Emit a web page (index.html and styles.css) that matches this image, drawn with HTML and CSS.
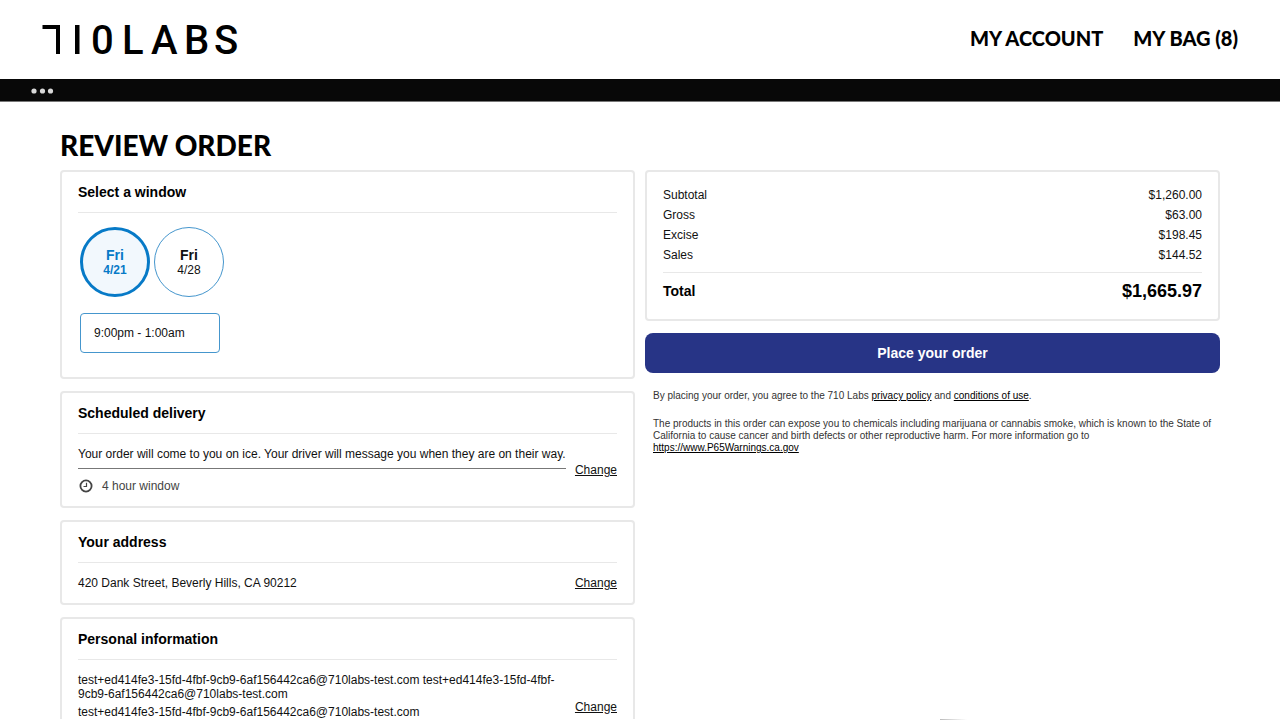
FILE: index.html
```html
<!DOCTYPE html>
<html lang="en">
<head>
<meta charset="utf-8">
<meta name="viewport" content="width=device-width, initial-scale=1">
<title>Review Order</title>
<link rel="stylesheet" href="styles.css">
</head>
<body>
<header class="header">
  <a class="logo" href="#" aria-label="710 Labs">
    <svg width="200" height="56" viewBox="0 0 200 56" aria-hidden="true">
      <rect x="1.5" y="15" width="17.5" height="4"/>
      <rect x="15" y="15" width="4" height="29"/>
      <rect x="34" y="15" width="4.5" height="29"/>
      <text class="logo-text" y="44" x="50 81 110 143 173">0LABS</text>
    </svg>
  </a>
  <nav class="nav">
    <a href="#">MY ACCOUNT</a>
    <a href="#">MY BAG (8)</a>
  </nav>
</header>
<div class="menubar">
  <button class="more" type="button" aria-label="Menu">
    <svg width="24" height="6" viewBox="0 0 24 6" fill="#d8d8d8"><circle cx="3" cy="3" r="2.6"/><circle cx="11.5" cy="3" r="2.6"/><circle cx="19.5" cy="3" r="2.6"/></svg>
  </button>
</div>
<main class="page">
  <h1 class="title">REVIEW ORDER</h1>
  <div class="columns">
    <div class="column">
      <section class="card">
        <h2 class="card-title">Select a window</h2>
        <div class="window">
          <div class="dates">
            <button class="date selected" type="button" aria-pressed="true"><b>Fri</b><span>4/21</span></button>
            <button class="date" type="button" aria-pressed="false"><b>Fri</b><span>4/28</span></button>
          </div>
          <button class="slot" type="button">9:00pm - 1:00am</button>
        </div>
      </section>
      <section class="card">
        <h2 class="card-title">Scheduled delivery</h2>
        <div class="row">
          <div class="info">
            <p class="note">Your order will come to you on ice. Your driver will message you when they are on their way.</p>
            <p class="hours">
              <svg width="14" height="14" viewBox="0 0 14 14" fill="none" stroke="#444"><circle cx="7" cy="7" r="5.6" stroke-width="1.8"/><path d="M7.5 3.8V7.5H4.5" stroke-width="1.2"/></svg>
              4 hour window
            </p>
          </div>
          <a class="change" href="#">Change</a>
        </div>
      </section>
      <section class="card">
        <h2 class="card-title">Your address</h2>
        <div class="row">
          <p>420 Dank Street, Beverly Hills, CA 90212</p>
          <a class="change" href="#">Change</a>
        </div>
      </section>
      <section class="card">
        <h2 class="card-title">Personal information</h2>
        <div class="row person">
          <div class="info">
            <p>test+ed414fe3-15fd-4fbf-9cb9-6af156442ca6@710labs-test.com test+ed414fe3-15fd-4fbf-9cb9-6af156442ca6@710labs-test.com</p>
            <p>test+ed414fe3-15fd-4fbf-9cb9-6af156442ca6@710labs-test.com</p>
          </div>
          <a class="change" href="#">Change</a>
        </div>
      </section>
    </div>
    <div class="column">
      <section class="card">
        <dl class="costs">
          <div><dt>Subtotal</dt><dd>$1,260.00</dd></div>
          <div><dt>Gross</dt><dd>$63.00</dd></div>
          <div><dt>Excise</dt><dd>$198.45</dd></div>
          <div><dt>Sales</dt><dd>$144.52</dd></div>
          <div class="total"><dt>Total</dt><dd>$1,665.97</dd></div>
        </dl>
      </section>
      <button class="place" type="button">Place your order</button>
      <div class="legal">
        <p>By placing your order, you agree to the 710 Labs <a href="#">privacy policy</a> and <a href="#">conditions of use</a>.</p>
        <p>The products in this order can expose you to chemicals including marijuana or cannabis smoke, which is known to the State of California to cause cancer and birth defects or other reproductive harm. For more information go to <a href="#">https://www.P65Warnings.ca.gov</a></p>
      </div>
    </div>
  </div>
</main>
<div class="edge"></div>
</body>
</html>
```
FILE: styles.css
```css
* { box-sizing: border-box; }
body {
  margin: 0;
  background: #fff;
  color: #111;
  font: 12px/16px "Liberation Sans", Arial, sans-serif;
}
p, h1, h2, dl, dd { margin: 0; }
h1, h2 { color: #000; }
a { color: inherit; }
button { font: inherit; color: inherit; cursor: pointer; }
.header {
  display: flex;
  align-items: center;
  justify-content: space-between;
  height: 79px;
  padding: 0 42px 3px 41px;
}
.logo svg { display: block; overflow: visible; }
.logo-text { font: 500 40px Roboto, sans-serif; }
.nav { display: flex; gap: 30px; }
.nav a {
  color: #000;
  font: 900 20px/24px Lato, sans-serif;
  text-decoration: none;
}
.menubar {
  display: flex;
  align-items: center;
  height: 23px;
  padding: 2px 31px 0;
  background: #080808;
  border-bottom: 1px solid #777;
}
.more { display: flex; padding: 0; border: 0; background: none; }
.page { padding: 25px 60px 0; }
.title {
  margin-bottom: 7px;
  font: 900 28px/36px Lato, sans-serif;
}
.columns {
  display: grid;
  grid-template-columns: minmax(0, 1fr) minmax(0, 1fr);
  gap: 10px;
  align-items: start;
}
.column { display: flex; flex-direction: column; gap: 12px; }
.card {
  padding: 0 16px;
  border: 2px solid #e8e8e8;
  border-radius: 4px;
}
.card-title {
  padding: 10px 0;
  border-bottom: 1px solid #e8e8e8;
  font-size: 14px;
  line-height: 20px;
}
.window { padding: 14px 2px 24px; }
.dates { display: flex; gap: 4px; margin-bottom: 16px; }
.date {
  display: flex;
  flex-direction: column;
  align-items: center;
  justify-content: center;
  width: 70px;
  height: 70px;
  padding: 0;
  border: 1px solid #4596cd;
  border-radius: 50%;
  background: #fff;
  line-height: 14px;
}
.date b { font-size: 14px; line-height: 16px; }
.date.selected {
  border: 3px solid #077ac7;
  background: #f2f8fd;
  color: #077ac7;
  font-weight: bold;
}
.slot {
  width: 140px;
  height: 40px;
  padding: 0 13px;
  border: 1px solid #4596cd;
  border-radius: 4px;
  background: #fff;
  text-align: left;
}
.row {
  display: flex;
  align-items: center;
  justify-content: space-between;
  gap: 8px;
  padding: 12px 0;
}
.change { flex: none; }
.note {
  padding-bottom: 6px;
  border-bottom: 1px solid #777;
}
.hours {
  display: flex;
  align-items: center;
  gap: 9px;
  padding: 9px 0 0 1px;
  color: #444;
}
.person .info { padding-bottom: 22px; }
.person p { padding-top: 1px; line-height: 14px; }
.person p + p { margin-top: 3px; }
.costs { padding: 13px 0 18px; }
.costs div {
  display: flex;
  align-items: center;
  justify-content: space-between;
  line-height: 20px;
}
.costs .total {
  margin-top: 7px;
  padding-top: 8px;
  border-top: 1px solid #e8e8e8;
  color: #000;
  font-size: 14px;
  font-weight: bold;
}
.total dd { font-size: 18px; }
.place {
  height: 40px;
  border: 0;
  border-radius: 8px;
  background: #273486;
  color: #fff;
  font-size: 14px;
  font-weight: bold;
}
.legal {
  display: grid;
  gap: 16px;
  padding: 5px 8px;
  color: #333;
  font-size: 10px;
  line-height: 12px;
}
.legal a { color: #000; }
.edge {
  position: fixed;
  right: 0;
  bottom: 0;
  left: 0;
  height: 1px;
  background: linear-gradient(90deg, #bbb, #fff) 940px 0 / 27px 1px no-repeat #fff;
}
```
